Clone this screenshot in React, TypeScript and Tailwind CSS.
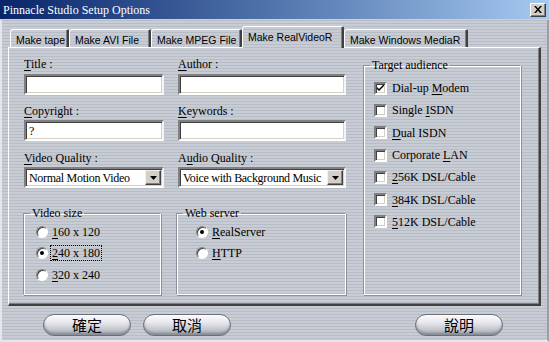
import React from "react";

const SERIF = "font-['Liberation_Serif','Noto_Sans_CJK_TC',serif]";
const SANS = "font-['Liberation_Sans',Arial,sans-serif]";
const STRIPES =
  "bg-[image:repeating-linear-gradient(to_bottom,#c8ccd4_0px,#c8ccd4_2px,#b8bcc4_2px,#b8bcc4_3px)] bg-[#c1c5cd]";

function U({ children }: { children: React.ReactNode }) {
  return <span className="underline underline-offset-[2px] decoration-1">{children}</span>;
}

function Sunken({ children, w }: { children?: React.ReactNode; w: string }) {
  return (
    <div
      className={`${w} h-[21px] bg-white border-2 border-t-[#808080] border-l-[#808080] border-b-white border-r-[#f4f4f4] shadow-[inset_1px_1px_0_#404040,inset_-1px_-1px_0_#d4d0c8] flex items-center pl-[3px] text-[12px] leading-[14px] text-black`}
    >
      {children}
    </div>
  );
}

function Select({ w, value }: { w: string; value: string }) {
  return (
    <div
      className={`${w} h-[21px] bg-white border-2 border-t-[#808080] border-l-[#808080] border-b-white border-r-[#f4f4f4] shadow-[inset_1px_1px_0_#404040,inset_-1px_-1px_0_#d4d0c8] flex items-center justify-between pl-[3px] pr-[1px] text-[12px] leading-[14px] text-black`}
    >
      <span className="whitespace-nowrap tracking-[-0.3px]">{value}</span>
      <div className="w-[16px] h-[15px] shrink-0 bg-[#d4d0c8] border border-t-[#f0f0f0] border-l-[#f0f0f0] border-b-[#404040] border-r-[#404040] shadow-[inset_-1px_-1px_0_#808080] flex items-center justify-center">
        <svg width="7" height="4" viewBox="0 0 7 4">
          <path d="M0 0H7L3.5 4Z" fill="#000" />
        </svg>
      </div>
    </div>
  );
}

function Label({ children }: { children: React.ReactNode }) {
  return <div className="h-[14px] text-[12px] leading-[14px] text-black whitespace-nowrap">{children}</div>;
}

function Radio({ checked, children, focus }: { checked?: boolean; children: React.ReactNode; focus?: boolean }) {
  return (
    <div className="flex items-center h-[21.5px]">
      <div className="w-[12px] h-[12px] rounded-full bg-white border-[1.5px] border-t-[#808080] border-l-[#808080] border-r-white border-b-white shadow-[inset_1px_1px_0_#404040] flex items-center justify-center">
        {checked && <div className="w-[4px] h-[4px] rounded-full bg-black" />}
      </div>
      <span
        className={`ml-[3px] px-[1px] text-[12px] leading-[14px] text-black whitespace-nowrap ${
          focus ? "outline outline-1 outline-dotted outline-black" : ""
        }`}
      >
        {children}
      </span>
    </div>
  );
}

function Check({ checked, children }: { checked?: boolean; children: React.ReactNode }) {
  return (
    <div className="flex items-center h-[22.3px]">
      <div className="w-[13px] h-[13px] bg-white border-2 border-t-[#808080] border-l-[#808080] border-b-white border-r-white shadow-[inset_1px_1px_0_#404040,inset_-1px_-1px_0_#d4d0c8] flex items-center justify-center">
        {checked && (
          <svg width="7" height="7" viewBox="0 0 7 7">
            <path d="M0 2L0 4L2 6L7 1L7 -1L2 4Z" fill="#000" />
          </svg>
        )}
      </div>
      <span className="ml-[5px] text-[12px] leading-[14px] text-black whitespace-nowrap">{children}</span>
    </div>
  );
}

function Group({
  title,
  w,
  h,
  children,
  inner,
}: {
  title: string;
  w: string;
  h: string;
  children: React.ReactNode;
  inner: string;
}) {
  return (
    <fieldset
      className={`${w} ${h} border border-t-[#8c9098] border-l-[#8c9098] border-b-white border-r-white shadow-[inset_1px_1px_0_#ffffff,1px_1px_0_#8c9098] p-0 m-0`}
    >
      <legend className="ml-[6px] px-[2px] text-[12px] leading-[14px] text-black whitespace-nowrap">{title}</legend>
      <div className={inner}>{children}</div>
    </fieldset>
  );
}

function Tab({ label, w, active }: { label: string; w: string; active?: boolean }) {
  return (
    <div
      className={`${w} ${
        active ? "h-[22px] pt-[4px] relative z-10 -mb-[1px] " : "h-[18px] pt-[4px]"
      } border-t border-l border-t-white border-l-white border-r-2 border-r-[#404040] rounded-tl-[3px] rounded-tr-[2px] shadow-[inset_-1px_0_0_#808080] pl-[5px] overflow-hidden whitespace-nowrap text-[10.5px] leading-[13px] text-black ${SANS} ${STRIPES}`}
    >
      {label}
    </div>
  );
}

function PillButton({ children, w }: { children: React.ReactNode; w: string }) {
  return (
    <div
      className={`${w} h-[22px] rounded-full border border-[#6a6e76] bg-[linear-gradient(to_bottom,#fbfbfc_0%,#e9eaee_35%,#c6c9d0_70%,#9ea2aa_100%)] shadow-[inset_0_-2px_2px_#8a8e96,inset_0_1px_0_#ffffff] flex items-center justify-center text-[15px] leading-[18px] text-black font-['Noto_Sans_CJK_TC',sans-serif]`}
    >
      {children}
    </div>
  );
}

export default function App() {
  return (
    <div className={`w-[549px] h-[342px] overflow-hidden flex flex-col ${SERIF} ${STRIPES}`}>
      {/* title bar */}
      <div className="h-[20px] flex items-center justify-between pl-[3px] pr-[3px] bg-gradient-to-r from-[#0a246a] to-[#a6caf0] border-b border-b-[#d4d0c8]">
        <span className="text-white text-[12px] leading-[14px] whitespace-nowrap">Pinnacle Studio Setup Options</span>
        <div className="w-[16px] h-[14px] bg-[#d4d0c8] border border-t-white border-l-white border-b-[#404040] border-r-[#404040] shadow-[inset_-1px_-1px_0_#808080] flex items-center justify-center">
          <svg width="8" height="7" viewBox="0 0 8 7">
            <path d="M0 0H2L4 2.5L6 0H8L5 3.5L8 7H6L4 4.5L2 7H0L3 3.5Z" fill="#000" />
          </svg>
        </div>
      </div>

      <div className="flex-1 flex flex-col border-l-2 border-l-[#e4e6ea] border-r-2 border-r-[#9a9ea6] border-b-2 border-b-[#e4e6ea]">
        {/* tabs */}
        <div className="h-[27px] flex items-end pl-[8px]">
          <Tab label="Make tape" w="w-[59px]" />
          <Tab label="Make AVI File" w="w-[82px]" />
          <Tab label="Make MPEG File" w="w-[91px]" />
          <Tab label="Make RealVideoR" w="w-[102px]" active />
          <Tab label="Make Windows MediaR" w="w-[124px]" />
        </div>

        {/* panel */}
        <div className="ml-[6px] w-[533px] h-[259px] border-t border-l border-t-white border-l-white border-r-2 border-b-2 border-r-[#404040] border-b-[#404040] shadow-[inset_-1px_-1px_0_#808080] flex pl-[15px] pt-[9px]">
          <div className="w-[322px] flex flex-col">
            <div className="grid grid-cols-[140px_168px] gap-x-[14px]">
              <div>
                <Label>
                  <U>T</U>itle :
                </Label>
                <div className="mt-[3px]">
                  <Sunken w="w-[140px]" />
                </div>
                <div className="mt-[9px]">
                  <Label>
                    <U>C</U>opyright :
                  </Label>
                </div>
                <div className="mt-[2px]">
                  <Sunken w="w-[140px]">?</Sunken>
                </div>
                <div className="mt-[10px]">
                  <Label>
                    <U>V</U>ideo Quality :
                  </Label>
                </div>
                <div className="mt-[2px]">
                  <Select w="w-[140px]" value="Normal Motion Video" />
                </div>
              </div>
              <div>
                <Label>
                  <U>A</U>uthor :
                </Label>
                <div className="mt-[3px]">
                  <Sunken w="w-[168px]" />
                </div>
                <div className="mt-[9px]">
                  <Label>
                    <U>K</U>eywords :
                  </Label>
                </div>
                <div className="mt-[2px]">
                  <Sunken w="w-[168px]" />
                </div>
                <div className="mt-[10px]">
                  <Label>
                    A<U>u</U>dio Quality :
                  </Label>
                </div>
                <div className="mt-[2px]">
                  <Select w="w-[168px]" value="Voice with Background Music" />
                </div>
              </div>
            </div>

            <div className="flex gap-x-[15px] mt-[18px] -ml-[1px]">
              <Group title="Video size" w="w-[138px]" h="h-[89px]" inner="pl-[12px] pt-[1px]">
                <Radio>
                  <U>1</U>60 x 120
                </Radio>
                <Radio checked focus>
                  <U>2</U>40 x 180
                </Radio>
                <Radio>
                  <U>3</U>20 x 240
                </Radio>
              </Group>
              <Group title="Web server" w="w-[170px]" h="h-[89px]" inner="pl-[19px] pt-[1px]">
                <Radio checked>
                  <U>R</U>ealServer
                </Radio>
                <Radio>
                  <U>H</U>TTP
                </Radio>
              </Group>
            </div>
          </div>

          <div className="ml-[17px] mt-[1px]">
            <Group title="Target audience" w="w-[158px]" h="h-[237px]" inner="pl-[10px] pt-[5px]">
              <Check checked>
                Dial-up <U>M</U>odem
              </Check>
              <Check>
                Single <U>I</U>SDN
              </Check>
              <Check>
                <U>D</U>ual ISDN
              </Check>
              <Check>
                Corporate <U>L</U>AN
              </Check>
              <Check>
                <U>2</U>56K DSL/Cable
              </Check>
              <Check>
                <U>3</U>84K DSL/Cable
              </Check>
              <Check>
                <U>5</U>12K DSL/Cable
              </Check>
            </Group>
          </div>
        </div>

        {/* buttons */}
        <div className="flex mt-[8px] pl-[41px]">
          <PillButton w="w-[88px]">確定</PillButton>
          <div className="ml-[12px]">
            <PillButton w="w-[88px]">取消</PillButton>
          </div>
          <div className="ml-[184px]">
            <PillButton w="w-[88px]">說明</PillButton>
          </div>
        </div>
      </div>
    </div>
  );
}
